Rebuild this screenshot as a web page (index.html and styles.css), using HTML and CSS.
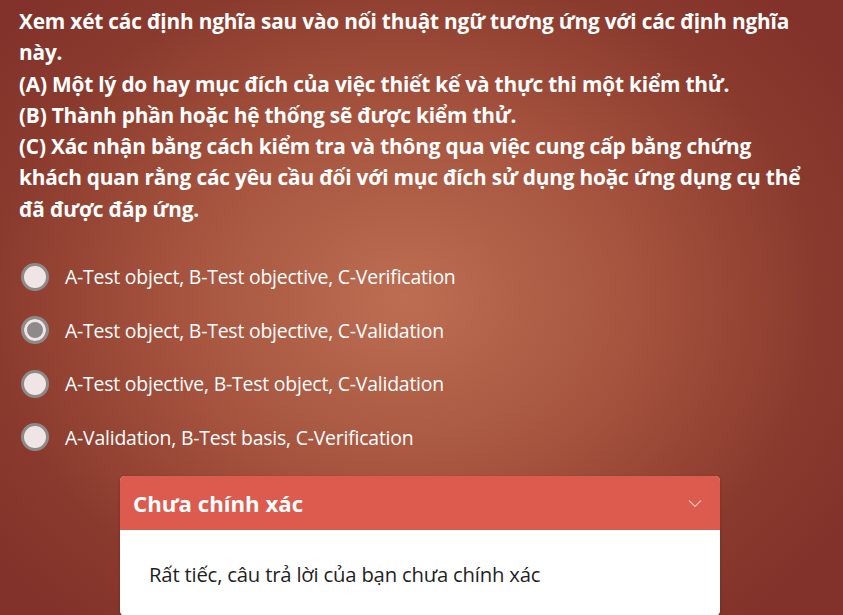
FILE: index.html
```html
<!DOCTYPE html>
<html lang="vi">
<head>
<meta charset="utf-8">
<link rel="stylesheet" href="styles.css">
</head>
<body>
<main class="page">
  <p class="question">Xem xét các định nghĩa sau vào nối thuật ngữ tương ứng với các định nghĩa này.<br>(A) Một lý do hay mục đích của việc thiết kế và thực thi một kiểm thử.<br>(B) Thành phần hoặc hệ thống sẽ được kiểm thử.<br>(C) Xác nhận bằng cách kiểm tra và thông qua việc cung cấp bằng chứng khách quan rằng các yêu cầu đối với mục đích sử dụng hoặc ứng dụng cụ thể đã được đáp ứng.</p>
  <ul class="options">
    <li class="option"><span class="radio"></span><span class="label">A-Test object, B-Test objective, C-Verification</span></li>
    <li class="option"><span class="radio checked"></span><span class="label">A-Test object, B-Test objective, C-Validation</span></li>
    <li class="option"><span class="radio"></span><span class="label">A-Test objective, B-Test object, C-Validation</span></li>
    <li class="option"><span class="radio"></span><span class="label">A-Validation, B-Test basis, C-Verification</span></li>
  </ul>
  <section class="feedback">
    <header class="feedback-head">
      <h2 class="feedback-title">Chưa chính xác</h2>
      <svg class="chevron" width="14" height="9" viewBox="0 0 14 9"><path d="M1 1.5 L7 7.5 L13 1.5" fill="none" stroke="#f4c2bb" stroke-width="1.2"/></svg>
    </header>
    <div class="feedback-body">Rất tiếc, câu trả lời của bạn chưa chính xác</div>
  </section>
</main>
</body>
</html>
```
FILE: styles.css
```css
html, body {
  margin: 0;
  height: 100%;
}
body {
  background: radial-gradient(ellipse 520px 420px at 405px 300px, #bd6e52 0%, #a5533e 45%, #8a3a2d 80%, #82322a 100%);
  background-color: #82322a;
  font-family: "Open Sans", "Noto Sans", sans-serif;
  color: #fff;
  overflow: hidden;
}
.page {
  padding: 6px 33px 0 19px;
}
.question {
  margin: 0;
  font-weight: 700;
  font-size: 20.85px;
  line-height: 31.3px;
  letter-spacing: -0.2px;
}
.options {
  list-style: none;
  margin: 25px 0 0 0;
  padding: 0;
}
.option {
  display: flex;
  align-items: center;
  gap: 16px;
  height: 53.5px;
  padding-left: 2px;
}
.radio {
  box-sizing: border-box;
  width: 28px;
  height: 28px;
  border-radius: 50%;
  border: 3px solid #8f8a8a;
  background: #efe5e5;
  flex: none;
}
.radio.checked {
  background: #8f8a8a;
  box-shadow: inset 0 0 0 3px #efe5e5;
}
.label {
  font-size: 19.4px;
  letter-spacing: -0.2px;
}
.feedback {
  margin: 12px 0 0 101px;
  width: 600px;
  border-radius: 5px;
  overflow: hidden;
  background: #fff;
  box-shadow: 0 1px 3px rgba(0,0,0,0.25);
}
.feedback-head {
  display: flex;
  align-items: center;
  justify-content: space-between;
  height: 54px;
  padding: 0 18px 0 13px;
  background: #dc5b4e;
}
.feedback-title {
  margin: 0;
  font-size: 22.2px;
  font-weight: 700;
  color: #fff;
}
.feedback-body {
  padding: 30px 29px 28px;
  font-size: 20.3px;
  color: #1f1f1f;
  letter-spacing: -0.2px;
}
```
